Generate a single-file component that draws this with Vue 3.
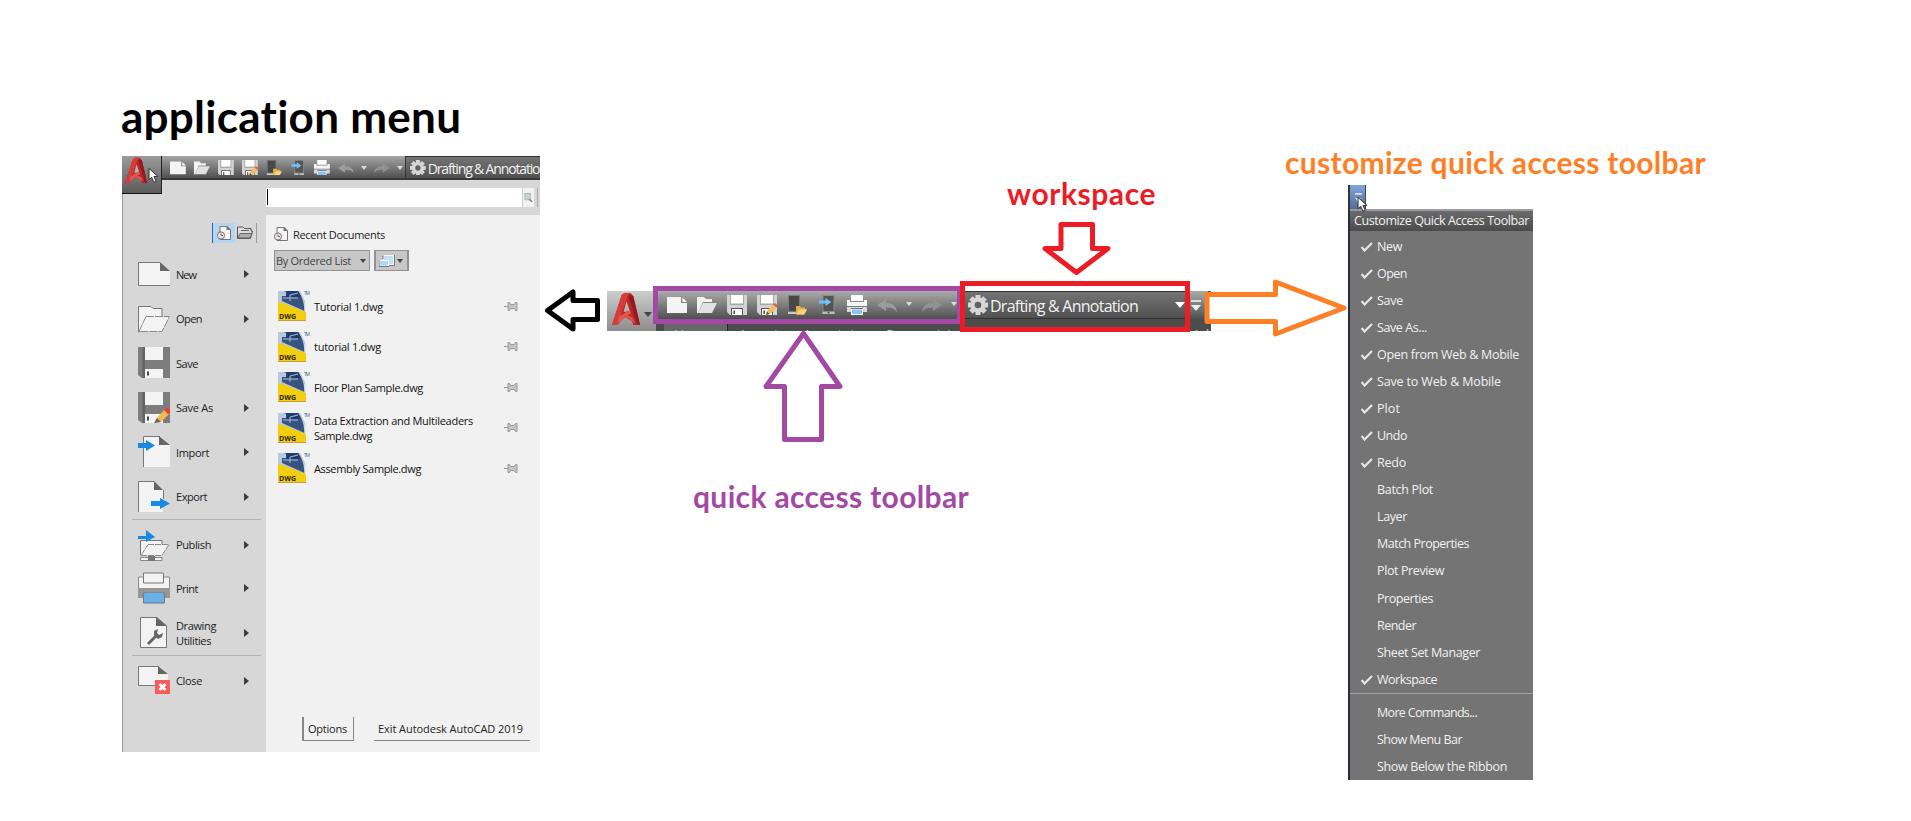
<script setup>
import { h } from 'vue'

// Spreads the letters so that a label takes the given width.
const vFit = {
  mounted(el, { value }) {
    const n = el.textContent.length
    const natural = el.getBoundingClientRect().width
    el.style.letterSpacing = (value - natural) / n + 'px'
  },
}

const p = (d, fill, extra = {}) => h('path', { d, fill, ...extra })
const line = (d, stroke, w = 1) => h('path', { d, fill: 'none', stroke, 'stroke-width': w })

const toolShapes = {
  new: () => [p('M0 2H14V8H20V18H0Z', '#f4f4f4'), p('M15.500 2.500L20 7H15.500Z', '#fff')],
  open: () => [p('M0 18V2H7L9 4H15V7H6L1 18Z', '#f2f2f2'), p('M6 8H20L15 18H1Z', '#e2e2e2')],
  save: () => [
    p('M0 0H20V20H3L0 17Z', '#d3d3d3'), p('M4 0H16V8H4Z', '#fff'), p('M3 0H4V9H16V0H17V10H3Z', '#a8a8a8'),
    p('M4 13H16V20H4Z', '#555'), p('M5 14H15V20H5Z', '#fff'), p('M6.500 15.500H8V19H6.500Z', '#444'),
  ],
  saveas: () => [...toolShapes.save(), p('M9 20L10 15.500L16 9.500L20 12L13.500 19Z', '#f1bd62'), p('M16 9.500L18 8L21 10.500L19.500 12.500Z', '#ed544c'), p('M9 20L10 16.500L12.500 19Z', '#555')],
  webopen: () => [p('M1 0H13V19H1Z', '#7c7c7c'), p('M2 1H12V16H2Z', '#484848'), p('M1 17H9V19H1Z', '#c9c9c9'), p('M9 11H13L14 12.500H18V14H20L17.500 19.500H9Z', '#e6af48'), p('M12 14.500H20L17 19.500H9.500Z', '#ffd27e')],
  websave: () => [p('M5.500 0H17.500V19H5.500Z', '#8c8c8c'), p('M6.500 1H16.500V16H6.500Z', '#555'), p('M5.500 17H17.500V19H5.500Z', '#bdbdbd'), p('M10.500 17H12.500V18.500H10.500Z', '#555'), p('M2 5.500H8.500V3L14.500 7L8.500 11V8.500H2Z', '#6fc1fb')],
  print: () => [p('M4 0H16V6H4Z', '#fff'), p('M0 5H3V7H17V5H20V11H0Z', '#f5f5f5'), p('M0 12H20V17H16V13H4V17H0Z', '#d9d9d9'), p('M4 14H16V20H4Z', '#fff'), p('M5 14.500H15V19H5Z', '#85c5f5')],
  undo: () => [p('M0 10L9 4V8C16 8 19 11 20 17C17 13 14 12.500 9 12.500V16Z', '#9c9c9c')],
  redo: () => [p('M20 10L11 4V8C4 8 1 11 0 17C3 13 6 12.500 11 12.500V16Z', '#929292')],
  gear: () => [
    ...[0, 45, 90, 135].map((a) => p('M7.500 0H12.500V20H7.500Z', '#d6d6d6', { transform: `rotate(${a} 10 10)` })),
    h('circle', { cx: 10, cy: 10, r: 7.6, fill: '#d6d6d6' }), h('circle', { cx: 10, cy: 10, r: 3.3, fill: '#606060' }),
  ],
}
const ToolIcon = ({ name }) => h('svg', { viewBox: '0 0 20 20' }, toolShapes[name]())
ToolIcon.props = ['name']

const page = () => [p('M0 0H22L32 9V24H0Z', '#f3f3f3'), line('M22 0.500H0.500V23.500H32', '#777'), p('M22 0L32 9H22Z', '#666')]
const disk = () => [
  p('M0 0H32V31H4L0 28Z', '#7d7d7d'), p('M4.500 0H7V31H4.500Z', '#646464'), p('M7 0H25V13H7Z', '#f4f4f4'),
  p('M7 22H25V31H7Z', '#f4f4f4'), p('M9 24.500H11V28.500H9Z', '#444'),
]
const bigShapes = {
  new: () => [h('g', { transform: 'translate(0 4)' }, page())],
  open: () => [
    p('M0.500 29V3.500H13L15 5.500H24V13L1 29Z', '#f3f3f3', { stroke: '#777' }),
    p('M8 13.500H31.500L24 28.500H1Z', '#f3f3f3', { stroke: '#8a8a8a', 'stroke-dasharray': '8 1' }),
  ],
  save: disk,
  saveas: () => [...disk(), p('M17 31L19 26L26 18L31 22L23 30Z', '#f3b955'), p('M26 18L29 16L32 17V21L30 22Z', '#f23b36'), p('M16 31L19 26L23 30Z', '#666')],
  import: () => [p('M5 0H22L32 9V31H5Z', '#f3f3f3'), line('M5.500 31V0.500H22', '#777'), p('M21 0L32 9H21Z', '#666'), p('M0 7H8V4L17 9.500L8 15V12H0Z', '#188ae4')],
  export: () => [p('M0 0H16L25 9V31H0Z', '#f3f3f3'), line('M16 0.500H0.500V31M25.500 9V18', '#777'), p('M16 0L25 9H16Z', '#666'), p('M13 20H22V17L32 22.500L22 28V25H13Z', '#188ae4')],
  publish: () => [
    p('M2.500 26V11.500H24V16L4 26Z', '#f3f3f3', { stroke: '#777' }), p('M10 15.500H31L24 26.500H3Z', '#f3f3f3', { stroke: '#888', 'stroke-dasharray': '6 1' }),
    p('M2.500 28.500H24V31.500H2.500Z', '#f3f3f3', { stroke: '#888' }), p('M10 27H17V32H10Z', '#777'), p('M0 7H8V1L17 8L8 13V10H0Z', '#188ae4'),
  ],
  print: () => [
    p('M0.500 5H31.500V17H0.500Z', '#f3f3f3', { stroke: '#888' }), p('M0 16H32V26H0Z', '#969696'), p('M5.500 1H25.500V11H5.500Z', '#f3f3f3', { stroke: '#777' }),
    p('M5.500 21H26.500V31H5.500Z', '#68b1ea', { stroke: '#777' }), p('M7 21H25V30H7Z', '#68b1ea'),
  ],
  utilities: () => [
    p('M2.500 0.500H19L28.500 9V30.500H2.500Z', '#f3f3f3', { stroke: '#777' }), p('M18 0L29 9H18Z', '#666'),
    line('M10 27L18 19', '#666', 3), p('M16 18V14L20 12L19 16L21 18L25 16L24 20L20 22Z', '#666'),
  ],
  close: () => [
    p('M0 1H21L30 9V20H0Z', '#f3f3f3'), line('M21 1.500H0.500V20.500H17', '#777'), p('M20 1L30 9H20Z', '#666'),
    p('M17 15H32V29H17Z', '#f95b58'), line('M21.500 19L27.500 25M27.500 19L21.500 25', '#fff', 2.8),
  ],
}
const BigIcon = ({ name }) => h('svg', { viewBox: '0 0 32 32', width: 32, height: 32 }, bigShapes[name]())
BigIcon.props = ['name']

const AppLogo = () =>
  h('svg', { viewBox: '0 0 30 34', preserveAspectRatio: 'none' }, [
    p('M0 33L10 3L13 1H19L22 4L29 33H22L19.500 25C14 24 10 27 7 32Z', '#b8262a'),
    p('M10 3L13 1H19L16 4L6 33H0Z', '#d63c38'),
    p('M15 9L18.500 19L12 20Z', '#b9b3b3'),
    p('M7 25L18 18L20 21L11 27L6 32Z', '#e15a50'),
    p('M17 3L22 4L29 33L26 32Z', '#92191e'),
    p('M10 22L21 25L24 31L16 27Z', '#dd5149'),
  ])

const DocIcon = () =>
  h('svg', { viewBox: '0 0 14 14', width: 14, height: 14 }, [
    p('M3 0.500H10L13.500 4V13.500H3Z', '#f5f5f5', { stroke: '#777' }), p('M9.500 0H10.500L14 4H9.500Z', '#777'),
    h('circle', { cx: 4, cy: 9.5, r: 3.6, fill: '#e9e6e6', stroke: '#777' }), line('M4 7.500V9.500H6', '#9c5555'),
  ])
const Cursor = () =>
  h('svg', { viewBox: '0 0 12 18', width: 11, height: 16 }, [
    p('M1 0.500V13L4 10.500L6.500 16L9 15L6.500 9.500H11Z', '#fff', { stroke: '#222' }),
  ])

const tools = [
  { name: 'new' }, { name: 'open' }, { name: 'save' }, { name: 'saveas' },
  { name: 'webopen' }, { name: 'websave' }, { name: 'print' },
  { name: 'undo', drop: true }, { name: 'redo', drop: true },
]

const commands = [
  { label: ['New'], w: [20], icon: 'new', sub: true },
  { label: ['Open'], w: [26], icon: 'open', sub: true },
  { label: ['Save'], w: [22], icon: 'save' },
  { label: ['Save As'], w: [37], icon: 'saveas', sub: true },
  { label: ['Import'], w: [33], icon: 'import', sub: true },
  { label: ['Export'], w: [31], icon: 'export', sub: true },
  { label: ['Publish'], w: [35], icon: 'publish', sub: true, rule: true },
  { label: ['Print'], w: [22], icon: 'print', sub: true },
  { label: ['Drawing', 'Utilities'], w: [40, 35], icon: 'utilities', sub: true },
  { label: ['Close'], w: [26], icon: 'close', sub: true, rule: true },
]

const documents = [
  { label: ['Tutorial 1.dwg'], w: [69] },
  { label: ['tutorial 1.dwg'], w: [67] },
  { label: ['Floor Plan Sample.dwg'], w: [109] },
  { label: ['Data Extraction and Multileaders', 'Sample.dwg'], w: [159, 58] },
  { label: ['Assembly Sample.dwg'], w: [107] },
]

const options = [
  ['New', 25, 1], ['Open', 30, 1], ['Save', 26, 1], ['Save As...', 50, 1], ['Open from Web & Mobile', 142, 1],
  ['Save to Web & Mobile', 124, 1], ['Plot', 23, 1], ['Undo', 30, 1], ['Redo', 29, 1], ['Batch Plot', 56, 0],
  ['Layer', 30, 0], ['Match Properties', 92, 0], ['Plot Preview', 67, 0], ['Properties', 56, 0], ['Render', 39, 0],
  ['Sheet Set Manager', 103, 0], ['Workspace', 60, 1],
]
const moreOptions = [['More Commands...', 100], ['Show Menu Bar', 85], ['Show Below the Ribbon', 130]]
</script>

<template>
  <main class="canvas">
    <h1 class="note title-app"><span v-fit="341">application menu</span></h1>
    <h2 class="note title-workspace"><span v-fit="149">workspace</span></h2>
    <h2 class="note title-quick"><span v-fit="276">quick access toolbar</span></h2>
    <h2 class="note title-customize"><span v-fit="421">customize quick access toolbar</span></h2>

    <section class="app-menu">
      <header class="app-bar">
        <div class="tools small">
          <template v-for="t in tools" :key="t.name">
            <ToolIcon :name="t.name" class="tool" />
            <i v-if="t.drop" class="drop"></i>
          </template>
        </div>
        <div class="workspace small">
          <ToolIcon name="gear" class="tool" />
          <span v-fit="119" class="ws-label">Drafting &amp; Annotation</span>
        </div>
      </header>
      <div class="app-button"><AppLogo class="logo" /></div>
      <Cursor class="cursor" />

      <div class="app-body">
        <aside class="side">
          <div class="view-tabs">
            <span class="view-tab active"><DocIcon /></span>
            <span class="view-tab">
              <svg viewBox="0 0 16 14" width="16" height="14">
                <path d="M.5 12.500V1H6L7.500 2.500H14V5H15.500L13.500 12.500Z" fill="#ddd" stroke="#555" />
                <path d="M4 4.500H12M3 7.500H15L13 12H1Z" fill="#aaa" stroke="#666" />
              </svg>
            </span>
          </div>
          <nav class="commands">
            <div v-for="c in commands" :key="c.icon" class="command" :class="{ ruled: c.rule }">
              <BigIcon :name="c.icon" />
              <div class="command-label">
                <div v-for="(l, i) in c.label" :key="l"><span v-fit="c.w[i]">{{ l }}</span></div>
              </div>
              <i v-if="c.sub" class="sub-arrow"></i>
            </div>
          </nav>
        </aside>

        <div class="content">
          <div class="search-row">
            <div class="search">
              <i class="caret"></i>
              <span class="search-button">
                <svg viewBox="0 0 10 10" width="9" height="9">
                  <rect x="1" y="0.500" width="6" height="7" fill="#c3d5d8" stroke="#a9b2b4" />
                  <path d="M6 7L9 10" stroke="#777" stroke-width="1.500" />
                </svg>
              </span>
            </div>
            <i class="search-edge"></i>
          </div>
          <div class="recent">
            <div class="recent-title"><DocIcon /><span v-fit="92">Recent Documents</span></div>
            <div class="filters">
              <div class="filter order"><span v-fit="75">By Ordered List</span><i class="drop dark"></i></div>
              <div class="filter view">
                <svg viewBox="0 0 16 12" width="16" height="12">
                  <path d="M4.500.5H14.500V9.500H4.500Z" fill="#bfe2f6" stroke="#f8f8f8" />
                  <path d="M4 .5V4M4 10.500H15.500V0" fill="none" stroke="#777" />
                  <path d="M.5 5.500H9.500V11H.5Z" fill="#a9d9f8" stroke="#f8f8f8" />
                  <path d="M0 5V11.500H10" fill="none" stroke="#777" />
                </svg>
                <i class="drop dark"></i>
              </div>
            </div>
            <ul class="documents">
              <li v-for="d in documents" :key="d.label[0]" class="document">
                <svg class="dwg" viewBox="0 0 34 30" width="34" height="30">
                  <path d="M0 0H22L27 10V30H0Z" fill="#b9c8dc" />
                  <path d="M6 0H20C24 5 26 11 26.500 20L4 10V5H8V1Z" fill="#36547f" />
                  <path d="M9 0H20L23 6H8Z" fill="#203d72" />
                  <path d="M5 7H20M12 10V4L20 2" fill="none" stroke="#aebbd0" />
                  <path d="M0 11C7 12 16 17 28 21V30H0Z" fill="#f3ce0c" />
                  <path d="M0 29.500H28" stroke="#c79c3b" />
                  <path d="M27 11V20" stroke="#dce2e8" />
                  <text x="1" y="28" class="dwg-text" textLength="17" lengthAdjust="spacingAndGlyphs">DWG</text>
                  <text x="26" y="4" class="tm" textLength="6">TM</text>
                </svg>
                <div class="document-label">
                  <div v-for="(l, i) in d.label" :key="l"><span v-fit="d.w[i]">{{ l }}</span></div>
                </div>
                <svg class="pin" viewBox="0 0 14 11" width="14" height="11">
                  <path d="M0 5.500H4" stroke="#999" />
                  <path d="M4 1.500H5.500L6.500 3.500H10L11.500 1.500H13V9.500H11.500L10 7.500H6.500L5.500 9.500H4Z" fill="#c4c4c4" stroke="#999" />
                </svg>
              </li>
            </ul>
            <footer class="actions">
              <div class="action options"><span v-fit="39">Options</span></div>
              <div class="action exit"><span v-fit="145">Exit Autodesk AutoCAD 2019</span></div>
            </footer>
          </div>
        </div>
      </div>
    </section>

    <section class="strip">
      <div class="strip-app"><AppLogo class="logo" /><i class="drop dark"></i></div>
      <div class="strip-main">
        <div class="strip-bar">
          <div class="tools big">
            <template v-for="t in tools" :key="t.name">
              <ToolIcon :name="t.name" class="tool" />
              <i v-if="t.drop" class="drop"></i>
            </template>
          </div>
          <div class="workspace big">
            <ToolIcon name="gear" class="tool" />
            <span v-fit="148" class="ws-label">Drafting &amp; Annotation</span>
            <i class="drop ws-drop"></i>
          </div>
          <div class="customize"><i class="dash"></i><i class="drop"></i></div>
        </div>
        <div class="ribbon">
          <span class="tab home">Home</span><span class="tab insert">Insert</span><span class="tab annotate">Annotate</span>
          <span class="tab parametric">Parametric</span><span class="tab addins">Add</span>
        </div>
      </div>
    </section>

    <section class="custom-menu">
      <div class="custom-button">
        <i class="dash"></i><i class="drop"></i>
        <Cursor class="cursor" />
      </div>
      <div class="custom-list">
        <div class="custom-title"><span v-fit="175">Customize Quick Access Toolbar</span></div>
        <div class="custom-group">
          <div v-for="o in options" :key="o[0]" class="option">
            <span class="mark">
              <svg v-if="o[2]" viewBox="0 0 12 10" width="12" height="10">
                <path d="M.5 5L3.500 8.500L11 1" fill="none" stroke="#e6e6e6" stroke-width="2.200" />
              </svg>
            </span>
            <span v-fit="o[1]">{{ o[0] }}</span>
          </div>
        </div>
        <div class="custom-group more">
          <div v-for="o in moreOptions" :key="o[0]" class="option"><span class="mark"></span><span v-fit="o[1]">{{ o[0] }}</span></div>
        </div>
      </div>
    </section>

    <svg class="overlay" viewBox="0 0 1911 821" width="1911" height="821">
      <path d="M965 286H1185V291H965Z" fill="#fff" />
      <g fill="none" stroke-width="5" stroke-linejoin="round">
        <path d="M573 292V300.500H597.500V319.500H573V329L547.500 310.500Z" stroke="#000" />
        <path d="M1061 224.500H1092.500V248.500H1108L1076.500 272.500L1045 248.500H1061Z" stroke="#ed1c24" />
        <path d="M803.500 333.500L840 386.500H821.500V439.500H784.500V386.500H766Z" stroke="#a349a4" />
        <path d="M1207 294.500H1275.500V282L1344 308L1275.500 334V321.500H1207Z" fill="#fff" stroke="#ff7f27" />
      </g>
      <path d="M655.500 288.500H959.500V321.500H655.500Z" fill="none" stroke="#a349a4" stroke-width="5" />
      <path d="M962.500 283.500H1187.500V329.500H962.500Z" fill="none" stroke="#ed1c24" stroke-width="5" />
    </svg>
  </main>
</template>

<style>
body {
  background: #fff;
}
</style>

<style scoped>
.canvas {
  position: relative;
  width: 1911px;
  height: 821px;
  overflow: hidden;
  background: #fff;
  font-family: "Open Sans", "Noto Sans", sans-serif;
  white-space: nowrap;
}
.note {
  position: absolute;
  margin: 0;
  font-family: Lato, sans-serif;
  font-weight: 700;
  font-size: 30px;
  line-height: 36px;
}
.title-app { left: 121px; top: 90px; font-size: 44px; line-height: 52px; color: #000; }
.title-workspace { left: 1007px; top: 175px; color: #ed1c24; }
.title-quick { left: 693px; top: 478px; color: #a349a4; }
.title-customize { left: 1285px; top: 144px; color: #ff7f27; }

.tools { display: flex; align-items: center; }
.tool { flex: none; display: block; }
.drop {
  flex: none;
  width: 0;
  height: 0;
  border: 3px solid transparent;
  border-top: 4px solid #ddd;
  border-bottom: 0;
}
.drop.dark { border-top-color: #444; }
.workspace {
  display: flex;
  align-items: center;
  overflow: hidden;
  box-sizing: border-box;
  background: linear-gradient(#737373, #515151);
  color: #f2f2f2;
}
.ws-label { padding-top: 1px; }

.app-menu {
  position: absolute;
  left: 122px;
  top: 156px;
  width: 418px;
  height: 596px;
  background: #d7d7d7;
  overflow: hidden;
}
.app-bar {
  display: flex;
  height: 24px;
  box-sizing: border-box;
  padding-left: 48px;
  background: linear-gradient(#a5a5a5, #505050);
  border-bottom: 2px solid #383838;
}
.tools.small { gap: 8.200px; width: 235px; flex: none; padding-top: 1px; box-sizing: border-box; }
.tools.small .drop { margin: 0 -1px; }
.small .tool { width: 15.800px; height: 15.800px; }
.workspace.small { width: 135px; height: 22px; padding-left: 4px; gap: 2px; border: solid #333; border-width: 1px 0 0 1px; font-size: 14px; }
.app-button {
  position: absolute;
  left: 0;
  top: 0;
  width: 40px;
  height: 38px;
  box-sizing: border-box;
  border-right: 1px solid #222;
  border-bottom: 1px solid #111;
  background: linear-gradient(#9b9b9b, #5b5b5b);
}
.app-button .logo { display: block; width: 23px; height: 27px; margin: 1px 0 0 3px; }
.app-menu > .cursor { position: absolute; left: 26px; top: 12px; }
.app-body { display: flex; height: 572px; }
.side {
  width: 144px;
  flex: none;
  box-sizing: border-box;
  border-left: 1px solid #999;
  padding-top: 43px;
}
.view-tabs {
  display: flex;
  width: 45px;
  height: 20px;
  margin-left: 89px;
  box-sizing: border-box;
  border-left: 1px solid #1b6fc4;
  border-right: 1px solid #999;
}
.view-tab { display: flex; align-items: center; justify-content: center; width: 22px; }
.view-tab.active { background: #b7d5f3; }
.commands { display: flex; flex-direction: column; padding: 9px 5px 0 9px; }
.command {
  display: flex;
  align-items: center;
  height: 44.500px;
  padding-left: 6px;
  box-sizing: border-box;
  font-size: 11px;
  line-height: 15px;
  color: #222;
}
.command.ruled { height: 47px; border-top: 1px solid #b5b5b5; padding-top: 3px; }
.command-label { width: 68px; margin-left: 6px; }
.sub-arrow { border: 4px solid transparent; border-left: 5px solid #3c3c3c; border-right: 0; }

.content { flex: 1; display: flex; flex-direction: column; }
.search-row { display: flex; gap: 3px; height: 27px; padding-top: 8px; }
.search { display: flex; justify-content: space-between; width: 268px; height: 19px; background: #fff; }
.caret { width: 1px; height: 16px; margin: 1px; background: #000; }
.search-button { display: flex; align-items: center; justify-content: center; width: 11px; border-left: 1px solid #ccc; background: #f1f1f1; }
.search-edge { width: 1px; height: 19px; background: #aaa; }
.recent { flex: 1; display: flex; flex-direction: column; background: #f1f1f1; padding: 11px 10px 11px 8px; }
.recent-title { display: flex; align-items: center; gap: 5px; height: 16px; font-size: 11px; color: #222; }
.filters { display: flex; gap: 4px; margin-top: 8px; }
.filter {
  display: flex;
  align-items: center;
  justify-content: space-between;
  box-sizing: border-box;
  height: 21px;
  border: 1px solid #929292;
  background: #c7c7c7;
  font-size: 11px;
  color: #444;
}
.order { width: 96px; padding: 0 3px 0 1px; }
.view { width: 35px; padding: 0 4px 0 3px; border-right-width: 2px; border-left-width: 2px; }
.documents { list-style: none; margin: 15px 0 0; padding: 0 0 0 4px; }
.document { display: flex; align-items: center; height: 40.500px; font-size: 11px; line-height: 15px; color: #111; }
.dwg { flex: none; }
.document-label { width: 190px; margin-left: 2px; }
.dwg-text { font: 700 7px "Open Sans", sans-serif; fill: #2b2503; }
.tm { font: 5px "Open Sans", sans-serif; fill: #46648e; }
.actions { display: flex; gap: 20px; margin-top: auto; padding-left: 28px; font-size: 11px; color: #222; }
.action { display: flex; align-items: center; height: 24px; box-sizing: border-box; border-bottom: 1px solid #888; }
.options { width: 52px; padding-left: 4px; border-left: 2px solid #888; border-right: 1px solid #888; }
.exit { width: 156px; padding-left: 4px; }

.strip { position: absolute; left: 607px; top: 291px; width: 604px; height: 40px; display: flex; overflow: hidden; }
.strip-app {
  display: flex;
  align-items: center;
  flex: none;
  width: 49px;
  box-sizing: border-box;
  padding-left: 5px;
  background: linear-gradient(#cdcdcd, #8d8d8d);
}
.strip-app .logo { width: 29px; height: 34px; margin-top: -4px; }
.strip-app .drop { border-width: 5px 4.500px 0; margin-left: 3px; margin-top: 6px; }
.strip-main { width: 555px; flex: none; display: flex; flex-direction: column; background: #4c4c4c; }
.strip-bar { display: flex; height: 30px; background: linear-gradient(#ababab, #494949); width: 552px; }
.tools.big { gap: 10px; width: 309px; flex: none; padding-left: 11px; box-sizing: border-box; padding-bottom: 2px; }
.tools.big .drop { margin-left: -1px; margin-top: -3px; border-width: 4px 3.500px 0; }
.big .tool { width: 20px; height: 20px; }
.workspace.big { flex: none; width: 220px; height: 28px; padding-left: 3px; gap: 2px; font-size: 16px; border-top: 1px solid #333; border-bottom: 1px solid #303030; }
.ws-drop { margin-left: 35px; border-width: 6px 5px 0; border-top-color: #fff; }
.customize { display: flex; flex-direction: column; align-items: center; gap: 3px; padding: 9px 0 0 6px; }
.dash { width: 10px; height: 2px; background: #ddd; }
.customize .drop { border-width: 6px 5px 0; border-top-color: #eee; }
.ribbon { display: flex; height: 10px; overflow: hidden; font-size: 14px; line-height: 19px; color: #c8c8c8; }
.tab { flex: none; box-sizing: border-box; padding-top: 4px; height: 23px; }
.home { width: 64px; margin-left: 8px; padding-left: 10px; background: #686868; border-right: 1px solid #222; }
.insert { width: 75px; padding-left: 13px; }
.annotate { width: 83px; }
.parametric { width: 306px; }

.custom-menu {
  position: absolute;
  left: 1348px;
  top: 185px;
  width: 185px;
  height: 595px;
}
.custom-button {
  position: relative;
  z-index: 1;
  display: flex;
  flex-direction: column;
  gap: 3px;
  width: 18px;
  height: 24px;
  box-sizing: border-box;
  padding: 8px 0 0 5px;
  border-left: 2px solid #333;
  border-right: 1px solid #444;
  background: linear-gradient(#83a6da, #526c98);
}
.custom-button .dash { width: 7px; height: 1px; border-bottom: 1px solid #b8cae5; }
.custom-button .cursor { position: absolute; left: 7px; top: 12px; }
.custom-list {
  display: flex;
  flex-direction: column;
  height: 571px;
  box-sizing: border-box;
  border-left: 2px solid #292d3b;
  background: #747474;
  color: #f1f1f1;
}
.custom-title {
  height: 22px;
  box-sizing: border-box;
  padding-left: 4px;
  border-top: 2px solid #9b9b9f;
  background: linear-gradient(#6b6b6b, #4b4b4b);
  font-size: 12.500px;
  line-height: 20px;
}
.custom-group { padding-top: 2px; }
.option { display: flex; align-items: center; height: 27.080px; font-size: 12.500px; line-height: 20px; }
.mark { display: flex; width: 16px; padding-left: 11px; flex: none; }
.custom-group.more { border-top: 1px solid #a2a2a2; padding-top: 5px; }
.overlay { position: absolute; left: 0; top: 0; }
</style>
